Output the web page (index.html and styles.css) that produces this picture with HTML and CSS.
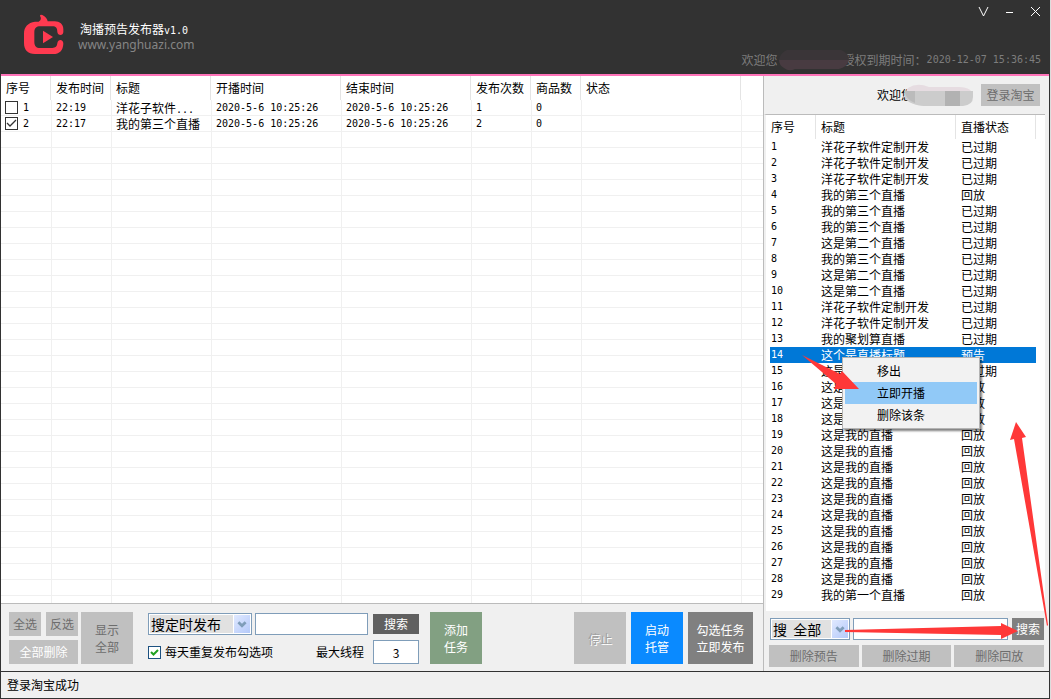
FILE: index.html
```html
<!DOCTYPE html>
<html lang="zh-CN">
<head>
<meta charset="utf-8">
<meta name="viewport" content="width=device-width, initial-scale=1">
<title>淘播预告发布器</title>
<link rel="stylesheet" href="styles.css">
</head>
<body>
<div class="window">
  <header class="titlebar">
    <svg class="logo" viewBox="0 0 144 144" aria-hidden="true">
      <path fill="#ff3a50" d="M60 18Q60 12 67 15C76 19 82 27 83 34H104C119 34 130 43 130 57V66C130 78 113 78 112 66C112 54 107 49 98 49H61C49 49 43 55 43 66V95C43 108 49 114 60 114H97C107 114 111 109 112 100C114 86 130 88 130 101C129 121 119 132 99 132H45C23 132 12 119 12 99V71C12 50 24 38 45 35H56C64 31 64 24 60 18Z"/>
      <path fill="#ff3a50" d="M69 62L99 81L69 100Z"/>
    </svg>
    <div class="brand">
      <h1 class="brand-name">淘播预告发布器<span class="num">v1.0</span></h1>
      <a class="brand-url" href="#">www.yanghuazi.com</a>
    </div>
    <div class="title-side">
      <div class="window-controls">
        <button type="button" aria-label="菜单"><svg viewBox="0 0 11 11"><path d="M1 1L5.5 10L10 1"/></svg></button>
        <button type="button" aria-label="最小化"><svg viewBox="0 0 11 11"><path d="M2 6.5H9"/></svg></button>
        <button type="button" aria-label="关闭"><svg viewBox="0 0 11 11"><path d="M1 1L10 10M10 1L1 10"/></svg></button>
      </div>
      <p class="license"><span>欢迎您</span><svg class="mask-dark" viewBox="0 0 70 21" aria-hidden="true"><path fill="#3a3538" d="M8 0H62Q70 3 70 10H0Q1 3 8 0Z"/><path fill="#483b41" d="M0 10H70Q68 17 60 19H16Q10 22 5 18Q0 15 0 10Z"/></svg><span>授权到期时间：</span><span class="num">2020-12-07 15:36:45</span></p>
    </div>
  </header>

  <main class="main">
    <section class="tasks">
      <div class="task-list">
        <table class="task-table">
          <colgroup><col class="w50"><col class="w60"><col class="w100"><col class="w130"><col class="w130"><col class="w60"><col class="w50"><col class="w160"><col></colgroup>
          <thead><tr><th>序号</th><th>发布时间</th><th>标题</th><th>开播时间</th><th>结束时间</th><th>发布次数</th><th>商品数</th><th>状态</th><th></th></tr></thead>
          <tbody>
            <tr><td><label class="row-check"><input type="checkbox" class="check-flat"><span class="num">1</span></label></td><td class="num">22:19</td><td>洋花子软件<span class="num">...</span></td><td class="num">2020-5-6 10:25:26</td><td class="num">2020-5-6 10:25:26</td><td class="num">1</td><td class="num">0</td><td></td><td></td></tr>
            <tr><td><label class="row-check"><input type="checkbox" class="check-flat" checked><span class="num">2</span></label></td><td class="num">22:17</td><td>我的第三个直播</td><td class="num">2020-5-6 10:25:26</td><td class="num">2020-5-6 10:25:26</td><td class="num">2</td><td class="num">0</td><td></td><td></td></tr>
            <tr class="blank-rows"><td></td><td></td><td></td><td></td><td></td><td></td><td></td><td></td><td></td></tr>
          </tbody>
        </table>
      </div>
      <div class="toolbar">
        <div class="select-buttons">
          <button type="button" class="btn btn-light">全选</button>
          <button type="button" class="btn btn-light">反选</button>
          <button type="button" class="btn btn-light btn-wide">全部删除</button>
        </div>
        <button type="button" class="btn btn-light btn-tile">显示<br>全部</button>
        <div class="search-form">
          <div class="form-row">
            <div class="combo combo-task">
              <select aria-label="搜索类型"><option>搜定时发布</option></select>
              <svg viewBox="0 0 16 20" aria-hidden="true"><path d="M4 8L8 12L12 8"/></svg>
            </div>
            <input type="text" class="field field-query" aria-label="搜索内容">
            <button type="button" class="btn btn-dark btn-search">搜索</button>
          </div>
          <div class="form-row">
            <label class="repeat"><input type="checkbox" class="check-green" checked>每天重复发布勾选项</label>
            <label class="threads" for="threads">最大线程</label>
            <input type="text" id="threads" class="field field-threads" value="3">
          </div>
        </div>
        <button type="button" class="btn btn-green btn-tile">添加<br>任务</button>
        <div class="run-buttons">
          <button type="button" class="btn btn-tile btn-stop" disabled>停止</button>
          <button type="button" class="btn btn-tile btn-blue">启动<br>托管</button>
          <button type="button" class="btn btn-tile btn-gray">勾选任务<br>立即发布</button>
        </div>
      </div>
    </section>

    <aside class="side">
      <div class="account">
        <span>欢迎您</span>
        <svg class="mask-light" viewBox="0 0 68 23" aria-hidden="true"><path fill="#e6dce1" d="M3 4Q12-2 24 3H54Q68 3 68 13H0Q0 7 3 4Z"/><path fill="#ccc" d="M0 7H68V13Q68 21 58 22H18Q2 20 0 13Z"/><path fill="#bbb" d="M0 7H10V19Q0 15 0 7Z"/><path fill="#b2b2b2" d="M40 7H55V22H40Z"/></svg>
        <button type="button" class="btn btn-login">登录淘宝</button>
      </div>
      <div class="live-list">
        <table class="live-table">
          <colgroup><col class="w46"><col class="w140"><col class="w80"></colgroup>
          <thead><tr><th>序号</th><th>标题</th><th>直播状态</th></tr></thead>
          <tbody>
            <tr><td class="num">1</td><td>洋花子软件定制开发</td><td>已过期</td></tr>
            <tr><td class="num">2</td><td>洋花子软件定制开发</td><td>已过期</td></tr>
            <tr><td class="num">3</td><td>洋花子软件定制开发</td><td>已过期</td></tr>
            <tr><td class="num">4</td><td>我的第三个直播</td><td>回放</td></tr>
            <tr><td class="num">5</td><td>我的第三个直播</td><td>已过期</td></tr>
            <tr><td class="num">6</td><td>我的第三个直播</td><td>已过期</td></tr>
            <tr><td class="num">7</td><td>这是第二个直播</td><td>已过期</td></tr>
            <tr><td class="num">8</td><td>我的第三个直播</td><td>已过期</td></tr>
            <tr><td class="num">9</td><td>这是第二个直播</td><td>已过期</td></tr>
            <tr><td class="num">10</td><td>这是第二个直播</td><td>已过期</td></tr>
            <tr><td class="num">11</td><td>洋花子软件定制开发</td><td>已过期</td></tr>
            <tr><td class="num">12</td><td>洋花子软件定制开发</td><td>已过期</td></tr>
            <tr><td class="num">13</td><td>我的聚划算直播</td><td>已过期</td></tr>
            <tr class="selected"><td class="num">14</td><td>这个是直播标题</td><td>预告</td></tr>
            <tr><td class="num">15</td><td>这是我的直播</td><td>已过期</td></tr>
            <tr><td class="num">16</td><td>这是我的直播</td><td>回放</td></tr>
            <tr><td class="num">17</td><td>这是我的直播</td><td>回放</td></tr>
            <tr><td class="num">18</td><td>这是我的直播</td><td>回放</td></tr>
            <tr><td class="num">19</td><td>这是我的直播</td><td>回放</td></tr>
            <tr><td class="num">20</td><td>这是我的直播</td><td>回放</td></tr>
            <tr><td class="num">21</td><td>这是我的直播</td><td>回放</td></tr>
            <tr><td class="num">22</td><td>这是我的直播</td><td>回放</td></tr>
            <tr><td class="num">23</td><td>这是我的直播</td><td>回放</td></tr>
            <tr><td class="num">24</td><td>这是我的直播</td><td>回放</td></tr>
            <tr><td class="num">25</td><td>这是我的直播</td><td>回放</td></tr>
            <tr><td class="num">26</td><td>这是我的直播</td><td>回放</td></tr>
            <tr><td class="num">27</td><td>这是我的直播</td><td>回放</td></tr>
            <tr><td class="num">28</td><td>这是我的直播</td><td>回放</td></tr>
            <tr><td class="num">29</td><td>我的第一个直播</td><td>回放</td></tr>
          </tbody>
        </table>
        <div class="context-menu" role="menu">
          <button type="button" role="menuitem">移出</button>
          <button type="button" role="menuitem" class="active">立即开播</button>
          <button type="button" role="menuitem">删除该条</button>
        </div>
      </div>
      <div class="side-search">
        <div class="combo combo-live">
          <select aria-label="直播筛选"><option>搜&nbsp;&nbsp;全部</option></select>
          <svg viewBox="0 0 16 20" aria-hidden="true"><path d="M4 8L8 12L12 8"/></svg>
        </div>
        <input type="text" class="field field-live" aria-label="搜索直播">
        <button type="button" class="btn btn-gray btn-find">搜索</button>
      </div>
      <div class="side-actions">
        <button type="button" class="btn btn-light">删除预告</button>
        <button type="button" class="btn btn-light">删除过期</button>
        <button type="button" class="btn btn-light">删除回放</button>
      </div>
      <svg class="arrows" viewBox="0 0 285 595" aria-hidden="true">
        <path d="M38 279L76 298L78 295L95 313L70 313L72 308Z"/>
        <path d="M81 554L237 550V547L254 555L237 563V559L81 556Z"/>
        <path d="M252 346L262 361L258 362L284 549L283 550L250 363L246 364Z"/>
      </svg>
    </aside>
  </main>

  <footer class="statusbar">登录淘宝成功</footer>
</div>
</body>
</html>
```
FILE: styles.css
```css
* { box-sizing: border-box; }

body {
  margin: 0;
  padding-right: 1px;
  background: #ddd;
  color: #000;
  font: 12px/16px "Noto Sans CJK SC", sans-serif;
}

button, input, select { font: inherit; color: inherit; margin: 0; border-radius: 0; }

.num { font-family: "DejaVu Sans Mono", monospace; font-size: 10px; }
span.num { line-height: 1; }

.window {
  display: flex;
  flex-direction: column;
  min-height: 100vh;
  border: solid #323232;
  border-width: 0 1px 1px;
  background: #f0f0f0;
}

/* Title bar */
.titlebar {
  display: flex;
  height: 76px;
  padding: 10px 8px 0 19px;
  background: #323232;
  border-bottom: 2px solid #ff73b9;
}
.logo { width: 48px; height: 48px; }
.brand { padding: 11px 0 0 10px; }
.brand-name { margin: 0; padding-left: 2px; font-size: 12px; font-weight: 400; line-height: 16px; color: #fff; }
.brand-url { display: block; font: 12px/16px "Noto Sans", sans-serif; color: #858585; text-decoration: none; }
.title-side { display: flex; flex-direction: column; justify-content: space-between; margin-left: auto; padding-bottom: 6px; }
.window-controls { display: flex; justify-content: flex-end; gap: 15px; margin-top: -4px; }
.window-controls button { width: 11px; height: 11px; padding: 0; border: 0; background: none; }
.window-controls svg { display: block; fill: none; stroke: #fff; stroke-width: 1; }
.license { display: flex; align-items: center; margin: 0; color: #7d7d7d; }
.mask-dark { z-index: 1; width: 70px; height: 21px; margin: -3px -6px -3px 1px; }

.main { display: flex; flex: 1; border-bottom: 1px solid #323232; }

/* Task list */
.tasks { display: flex; flex: 1; flex-direction: column; min-width: 0; border-right: 1px solid #bbb; }
.task-list { display: grid; flex: 1; background: #fff; border-bottom: 1px solid #bbb; }
table { border-spacing: 0; table-layout: fixed; }
th, td { padding: 0 0 0 5px; text-align: left; font-weight: 400; white-space: nowrap; overflow: hidden; }
th { height: 24px; border-right: 1px solid #e4e4e4; }
.task-table { width: 100%; height: 100%; }
.task-table td { height: 16px; padding-left: 4px; line-height: 15px; border-bottom: 1px solid #f0f0f0; }
.task-table td + td { border-left: 1px solid #f0f0f0; }
.task-table th:last-child { border-right: 0; }
.task-table .blank-rows td {
  height: auto;
  border-bottom: 0;
  background: repeating-linear-gradient(#fff 0 15px, #f0f0f0 15px 16px);
}
.w46 { width: 46px; }
.w50 { width: 50px; }
.w60 { width: 60px; }
.w80 { width: 80px; }
.w100 { width: 100px; }
.w130 { width: 130px; }
.w140 { width: 140px; }
.w160 { width: 160px; }

.row-check { display: flex; align-items: center; gap: 5px; height: 15px; }
.check-flat, .check-green {
  appearance: none;
  flex: none;
  width: 13px;
  height: 13px;
  border: 1px solid #333;
  background: #fff;
}
.check-flat:checked { background: url("data:image/svg+xml,%3Csvg xmlns='http://www.w3.org/2000/svg' viewBox='0 0 11 11'%3E%3Cpath d='M1 5l3 3 6-6' fill='none' stroke='%23333' stroke-width='1.300'/%3E%3C/svg%3E"); }
.check-green { border-color: #1c5180; }
.check-green:checked { background: #fff url("data:image/svg+xml,%3Csvg xmlns='http://www.w3.org/2000/svg' viewBox='0 0 11 11'%3E%3Cpath d='M2 5l2.500 2.500L9 3' fill='none' stroke='%2321a121' stroke-width='2'/%3E%3C/svg%3E"); }

/* Toolbar */
.toolbar { display: flex; padding: 8px 10px 7px 8px; }
.btn { display: block; padding: 0; border: 0; white-space: nowrap; color: #fff; }
.btn-light { background: #c0c0c0; color: #6d6d6d; }
.btn-dark { background: #606060; }
.btn-gray { background: #808080; }
.btn-green { background: #82a082; }
.btn-blue { background: #0a8aff; }
.btn-stop { background: #c0c0c0; color: #a0a0a0; text-shadow: 1px 1px #fff; }
.btn-tile { width: 52px; height: 52px; line-height: 17px; }
.select-buttons { display: grid; grid-template-columns: 32px 32px; grid-auto-rows: 24px; gap: 4px 5px; margin-right: 3px; }
.btn-wide { grid-column: 1 / -1; color: #fff; }
.search-form { display: flex; flex-direction: column; gap: 5px; margin: 1px 11px 0 15px; }
.form-row { display: flex; align-items: center; }
.combo { display: grid; grid-template-columns: 1fr 19px; height: 22px; border: 1px solid #7f9db9; padding: 1px; background: #fff; }
.combo select {
  appearance: none;
  grid-area: 1 / 1 / 2 / 3;
  min-width: 0;
  padding: 0 0 0 1px;
  border: 0;
  border-right: 17px solid #fff;
  background: #e1e1e1;
  font-size: 14px;
  line-height: 18px;
}
.combo svg {
  grid-area: 1 / 2;
  width: 16px;
  height: 18px;
  margin-left: 3px;
  background: linear-gradient(135deg, #e0e9ff, #b4c9fa);
  fill: none;
  stroke: #7f9db9;
  stroke-width: 3;
  pointer-events: none;
}
.combo-task { width: 104px; }
.field { height: 22px; padding: 0 4px; border: 1px solid #7f9db9; background: #fff; }
.field-query { width: 113px; margin: 0 5px 0 3px; }
.btn-search { width: 46px; height: 20px; }
.repeat { display: flex; align-items: center; gap: 4px; }
.threads { margin-left: auto; padding-right: 9px; }
.field-threads { width: 46px; height: 24px; text-align: center; }
.run-buttons { display: flex; gap: 5px; margin-left: auto; }
.toolbar > .btn-tile, .run-buttons { align-self: flex-start; }
.run-buttons .btn-gray { width: 65px; }

/* Live list */
.side { position: relative; display: flex; flex-direction: column; width: 285px; }
.account { display: flex; align-items: center; justify-content: flex-end; height: 38px; padding-right: 9px; }
.mask-light { width: 68px; height: 23px; margin: 0 8px 0 -8px; }
.btn-login { width: 59px; height: 22px; background: #c0c0c0; color: #6d6d6d; }
.live-list { position: relative; flex: 1; margin-right: 4px; padding: 0 0 8px 4px; border-top: 1px solid #bbb; border-left: 2px solid #f0f0f0; background: #fff; }
.live-table { width: 266px; }
.live-table td { height: 16px; line-height: 16px; }
.live-table th:first-child, .live-table td:first-child { padding-left: 1px; }
.selected { background: #0078d7; color: #fff; }

.context-menu {
  position: absolute;
  top: 242px;
  left: 76px;
  width: 138px;
  padding: 2px;
  border: 1px solid #b4b4b4;
  background: #f2f2f2;
  box-shadow: 2px 2px 2px #00000080;
}
.context-menu button { display: block; width: 100%; height: 22px; padding: 0 0 0 32px; border: 0; background: none; text-align: left; }
.context-menu .active { background: #91c9f7; }

.side-search { display: flex; align-items: center; gap: 3px; padding: 7px 5px 0 6px; }
.combo-live { width: 80px; }
.field-live { flex: 1; min-width: 0; }
.btn-find { width: 32px; height: 22px; margin-left: 1px; }
.side-actions { display: grid; grid-template-columns: repeat(3, 1fr); gap: 3px; padding: 5px 5px 4px; }
.side-actions .btn { height: 22px; }
.arrows { position: absolute; inset: 0 0 auto; width: 285px; height: 595px; fill: #ff3838; pointer-events: none; }

.statusbar { height: 26px; padding-left: 6px; line-height: 26px; }
```
